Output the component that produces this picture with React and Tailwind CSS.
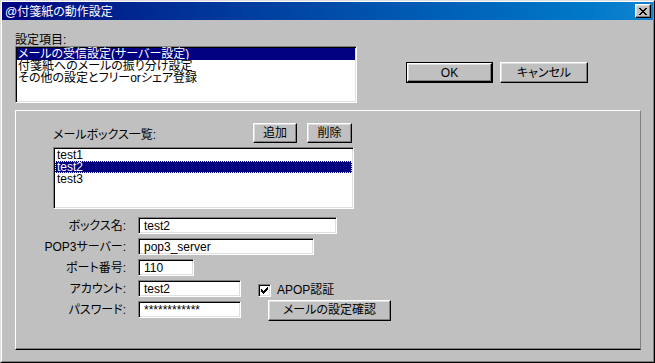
import React from "react";

const sunken =
  "border border-t-[#808080] border-l-[#808080] border-r-white border-b-white shadow-[inset_1px_1px_#000,inset_-1px_-1px_#dfdfdf] bg-white";

function Btn({ className = "", children }) {
  return (
    <div
      className={
        "flex items-center justify-center border border-t-white border-l-white border-r-black border-b-black shadow-[inset_-1px_-1px_#808080,inset_1px_1px_#dfdfdf] bg-[#c0c0c0] text-black leading-[12px] " +
        className
      }
    >
      {children}
    </div>
  );
}

function Row({ label, width, value, children }) {
  return (
    <div className="flex items-center h-[17px]">
      <div className="w-[110px] text-right leading-[12px] whitespace-nowrap">{label}</div>
      <div className={"ml-[12px] h-[17px] flex items-center px-[5px] pt-[1px] leading-[12px] " + sunken + " " + width}>
        {value}
      </div>
      {children}
    </div>
  );
}

export default function App() {
  return (
    <div
      className="w-[655px] h-[363px] bg-[#c0c0c0] text-black text-[12px] border border-t-[#dfdfdf] border-l-[#dfdfdf] border-r-black border-b-black [font-feature-settings:'palt'] overflow-hidden"
      style={{ fontFamily: '"Liberation Sans", "Noto Sans CJK JP", sans-serif' }}
    >
      <div className="h-full border border-t-white border-l-white border-r-[#808080] border-b-[#808080]">
        {/* title bar */}
        <div className="h-[18px] flex items-center bg-linear-to-r from-[#000080] to-[#1084d0] pl-[3px] pr-[2px]">
          <div className="text-white leading-[12px] pt-[1px]">@付箋紙の動作設定</div>
          <div className="ml-auto w-[16px] h-[14px] flex items-center justify-center border border-t-white border-l-white border-r-black border-b-black shadow-[inset_-1px_-1px_#808080,inset_1px_1px_#dfdfdf] bg-[#c0c0c0]">
            <svg width="8" height="7" viewBox="0 0 8 7" shapeRendering="crispEdges">
              <path d="M0 0h2v1h-2zM6 0h2v1h-2zM1 1h2v1h-2zM5 1h2v1h-2zM2 2h4v1h-4zM3 3h2v1h-2zM2 4h4v1h-4zM1 5h2v1h-2zM5 5h2v1h-2zM0 6h2v1h-2zM6 6h2v1h-2z" fill="#000" />
            </svg>
          </div>
        </div>

        {/* top section */}
        <div className="flex items-start pl-[13px]">
          <div className="w-[342px] mt-[14px]">
            <div className="leading-[12px]">設定項目:</div>
            <div className={"h-[57px] p-[1px] " + sunken}>
              <div className="bg-[#000080] text-white leading-[12px] h-[12px] px-[1px] whitespace-nowrap">メールの受信設定(サーバー設定)</div>
              <div className="leading-[12px] h-[12px] px-[1px] whitespace-nowrap">付箋紙へのメールの振り分け設定</div>
              <div className="leading-[12px] h-[12px] px-[1px] whitespace-nowrap">その他の設定とフリーorシェア登録</div>
            </div>
          </div>
          <div className="ml-[49px] mt-[42px] flex gap-[7px]">
            <div className="border border-black">
              <Btn className="w-[85px] h-[19px]">OK</Btn>
            </div>
            <Btn className="w-[88px] h-[21px]">キャンセル</Btn>
          </div>
        </div>

        {/* group panel */}
        <div className="ml-[13px] mt-[7px] w-[626px] h-[240px] border border-t-white border-l-white border-r-[#808080] border-b-black shadow-[inset_0_-1px_#808080]">
          <div className="ml-[37px] mt-[12px] w-[301px] flex items-end justify-between">
            <div className="leading-[12px] pb-[2px]">メールボックス一覧:</div>
            <div className="flex gap-[10px] mr-[2px]">
              <Btn className="w-[44px] h-[20px]">追加</Btn>
              <Btn className="w-[45px] h-[20px]">削除</Btn>
            </div>
          </div>
          <div className={"ml-[37px] mt-[4px] w-[301px] h-[62px] p-[1px] " + sunken}>
            <div className="leading-[12px] h-[12px] px-[2px]">test1</div>
            <div className="leading-[12px] h-[12px] px-[2px] bg-[#000080] text-white outline outline-1 outline-dotted outline-[#ffff99] -outline-offset-1">test2</div>
            <div className="leading-[12px] h-[12px] px-[2px]">test3</div>
          </div>

          <div className="mt-[8px] flex flex-col gap-[4px]">
            <Row label="ボックス名:" width="w-[199px]" value="test2" />
            <Row label="POP3サーバー:" width="w-[176px]" value="pop3_server" />
            <Row label="ポート番号:" width="w-[56px]" value="110" />
            <Row label="アカウント:" width="w-[103px]" value="test2">
              <div className={"ml-[17px] mt-[4px] w-[13px] h-[13px] flex items-center justify-center " + sunken}>
                <svg width="7" height="7" viewBox="0 0 7 7" shapeRendering="crispEdges">
                  <path d="M6 0h1v3h-1zM5 1h1v3h-1zM4 2h1v3h-1zM3 3h1v3h-1zM2 4h1v3h-1zM1 3h1v3h-1zM0 2h1v3h-1z" fill="#000" />
                </svg>
              </div>
              <div className="ml-[6px] mt-[3px] leading-[12px]">APOP認証</div>
            </Row>
            <Row label="パスワード:" width="w-[103px]" value="************">
              <Btn className="ml-[27px] w-[123px] h-[21px] mt-[1px]">メールの設定確認</Btn>
            </Row>
          </div>
        </div>
      </div>
    </div>
  );
}
